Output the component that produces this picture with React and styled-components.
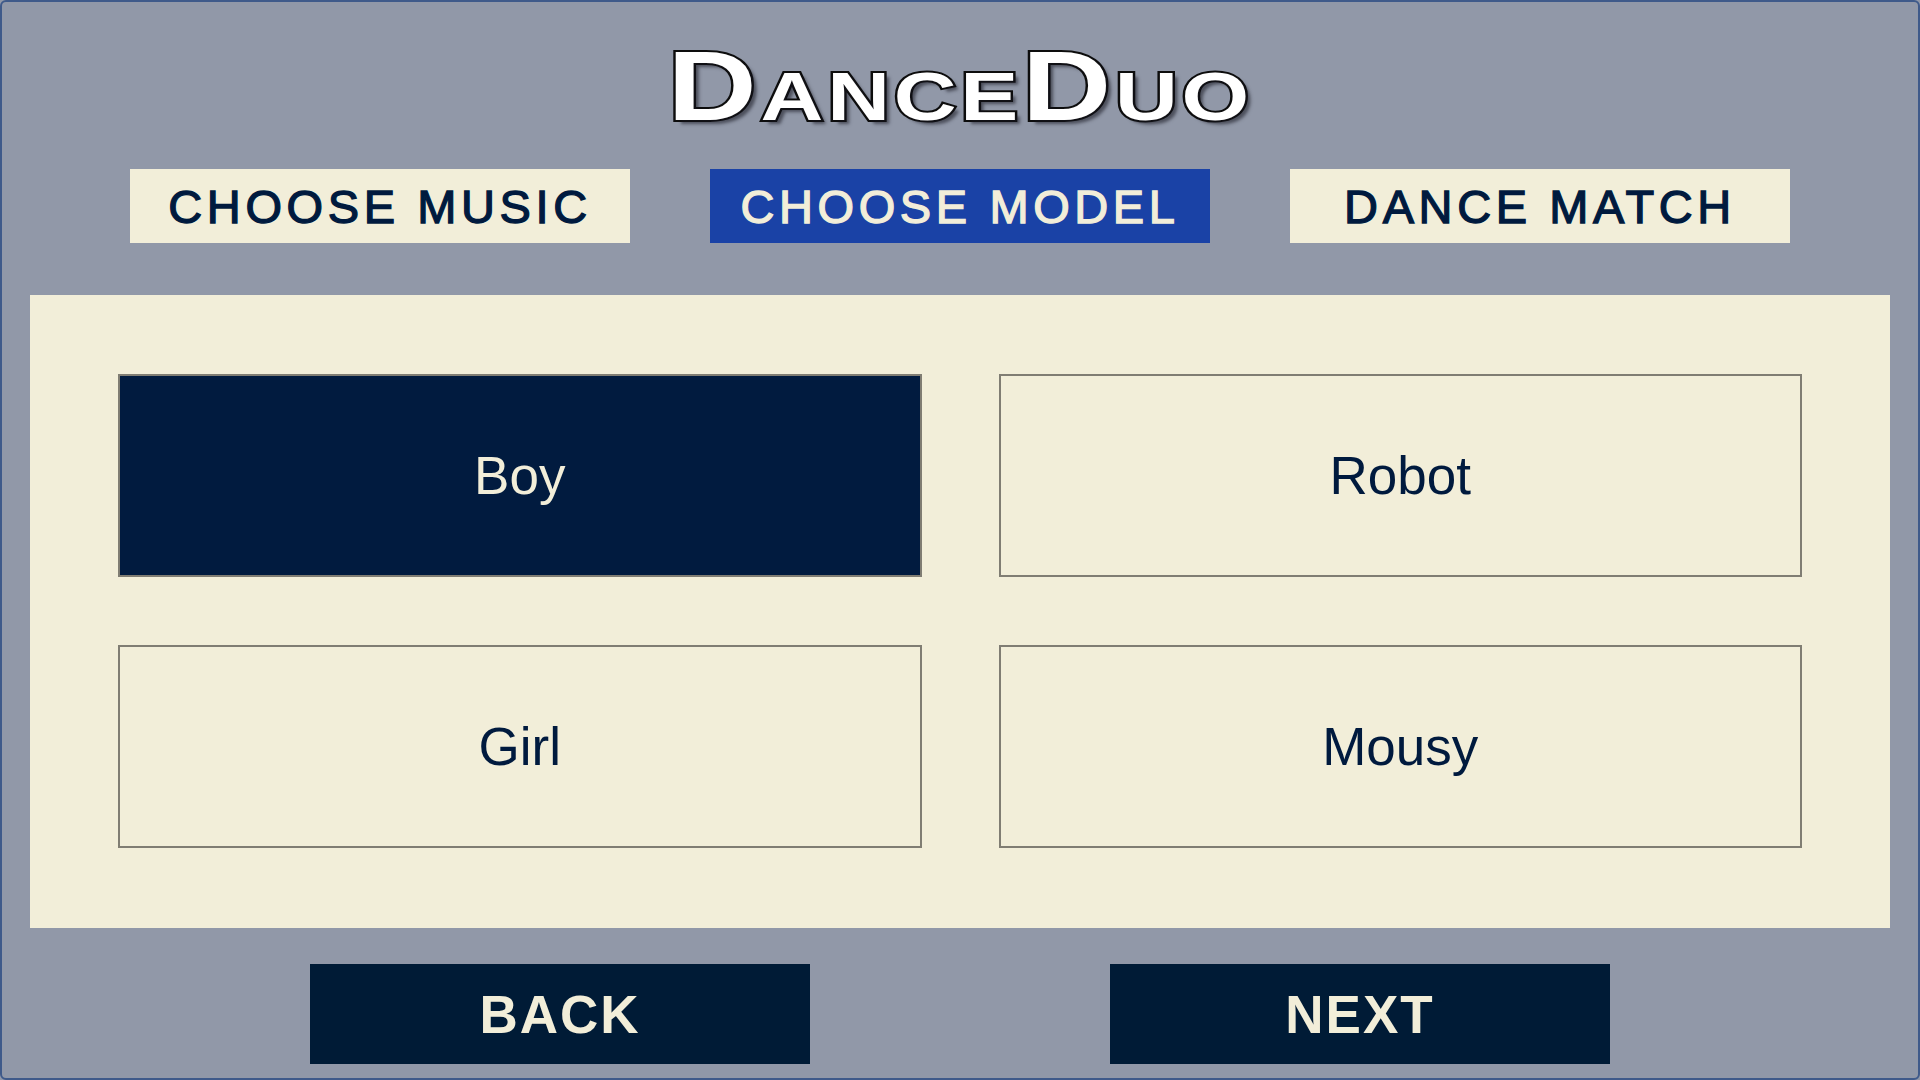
import React, { useState } from "react";
import styled, { createGlobalStyle } from "styled-components";

const GlobalStyle = createGlobalStyle`
  html, body {
    margin: 0;
    padding: 0;
    background: #9198a8;
  }
  * { box-sizing: border-box; }
`;

const Screen = styled.div`
  width: 1920px;
  height: 1080px;
  border: 2px solid #3f5a8a;
  border-radius: 6px;
  background: #9198a8;
  display: flex;
  flex-direction: column;
  align-items: center;
  font-family: "Liberation Sans", Arial, sans-serif;
  overflow: hidden;
`;

const Title = styled.h1`
  margin: 35px 0 0;
  height: 98px;
  font-family: "Liberation Sans", Arial, sans-serif;
  font-size: 98px;
  line-height: 98px;
  font-weight: 700;
  font-variant: small-caps;
  letter-spacing: 3px;
  color: #ffffff;
  -webkit-text-stroke: 4px #0d0d0d;
  paint-order: stroke fill;
  text-shadow: 4px 4px 3px rgba(20, 20, 30, 0.55);
  transform: scaleX(1.26);
  white-space: nowrap;
`;

const TabRow = styled.nav`
  margin-top: 34px;
  display: flex;
  gap: 80px;
`;

const Tab = styled.button`
  width: 500px;
  height: 74px;
  border: none;
  padding: 0;
  background: ${(p) => (p.$active ? "#1a42a6" : "#f2eed9")};
  color: ${(p) => (p.$active ? "#f2eed9" : "#001a3e")};
  font-family: "Liberation Sans", Arial, sans-serif;
  font-size: 47px;
  font-weight: 400;
  letter-spacing: 4.6px;
  -webkit-text-stroke: 1.3px currentColor;
  display: flex;
  align-items: center;
  justify-content: center;
  cursor: pointer;
`;

const Panel = styled.section`
  margin-top: 52px;
  width: 1860px;
  height: 633px;
  background: #f2eed9;
  padding: 79px 88px 80px;
  display: grid;
  grid-template-columns: 1fr 1fr;
  grid-template-rows: 203px 203px;
  gap: 68px 77px;
`;

const ModelCard = styled.button`
  border: 2px solid #807d73;
  background: ${(p) => (p.$selected ? "#011b3f" : "#f2eed9")};
  color: ${(p) => (p.$selected ? "#f2eed9" : "#001a3e")};
  font-family: "Liberation Sans", Arial, sans-serif;
  font-size: 53px;
  font-weight: 400;
  display: flex;
  align-items: center;
  justify-content: center;
  padding: 0;
  cursor: pointer;
`;

const ActionRow = styled.div`
  margin-top: 36px;
  display: flex;
  gap: 300px;
`;

const ActionButton = styled.button`
  width: 500px;
  height: 100px;
  border: none;
  background: #001b36;
  color: #f2eed9;
  font-family: "Liberation Sans", Arial, sans-serif;
  font-size: 53px;
  font-weight: 700;
  letter-spacing: 2px;
  display: flex;
  align-items: center;
  justify-content: center;
  cursor: pointer;
`;

const tabs = ["CHOOSE MUSIC", "CHOOSE MODEL", "DANCE MATCH"];
const models = ["Boy", "Robot", "Girl", "Mousy"];

export default function App() {
  const [model, setModel] = useState("Boy");

  return (
    <>
      <GlobalStyle />
      <Screen>
        <Title>DanceDuo</Title>
        <TabRow>
          {tabs.map((t) => (
            <Tab key={t} $active={t === "CHOOSE MODEL"}>
              {t}
            </Tab>
          ))}
        </TabRow>
        <Panel>
          {models.map((m) => (
            <ModelCard key={m} $selected={m === model} onClick={() => setModel(m)}>
              {m}
            </ModelCard>
          ))}
        </Panel>
        <ActionRow>
          <ActionButton>BACK</ActionButton>
          <ActionButton>NEXT</ActionButton>
        </ActionRow>
      </Screen>
    </>
  );
}
